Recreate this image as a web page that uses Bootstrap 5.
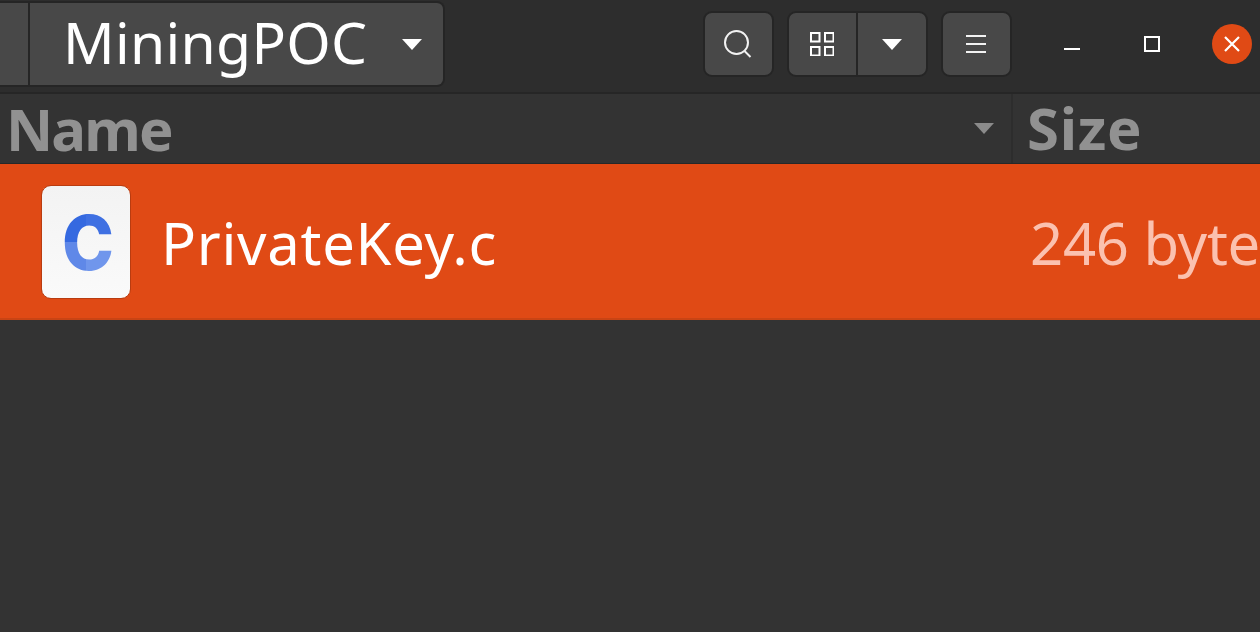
<!DOCTYPE html>
<html lang="en">
<head>
<meta charset="utf-8">
<title>MiningPOC</title>
<link href="https://cdn.jsdelivr.net/npm/bootstrap@5.3.0/dist/css/bootstrap.min.css" rel="stylesheet">
<style>
html,body{height:632px;overflow:hidden}
body{background:#333;font-family:"Noto Sans","Open Sans",sans-serif;color:#fff}
.fm-head{height:94px;background:#2d2d2d;border-bottom:2px solid #262626;padding-top:1px}
.fm-btn{background:#484848;border:2px solid #252525;display:flex;align-items:center;justify-content:center;padding:0;color:#fff}
.fm-crumb-stub{width:30px;height:86px;border-radius:0;border-left:0;border-right-width:2px}
.fm-crumb{width:415px;height:86px;border-left:0;border-radius:0 8px 8px 0;justify-content:flex-start;padding-left:33px}
.fm-crumb-text{font-size:57px;line-height:1;letter-spacing:.3px;position:relative;top:-2px}
.fm-crumb svg{margin-left:35px}
.fm-tools{margin-left:258px;padding-top:10px;gap:13px}
.fm-square{width:71px;height:66px;border-radius:9px}
.fm-split{display:flex}
.fm-split .fm-btn:first-child{width:70px;height:66px;border-radius:9px 0 0 9px;border-right-width:1px}
.fm-split .fm-btn:last-child{width:71px;height:66px;border-radius:0 9px 9px 0;border-left-width:1px}
.fm-search-ico{margin:0 2px 1px 0}
.fm-grid-ico{margin-right:1px}
.fm-menu-ico{margin:0 2px 1px 0}
.fm-win{margin-left:20px;padding-top:23px;gap:0}
.fm-winbtn{width:80px;height:40px;display:flex;align-items:center;justify-content:center}
.fm-min-ico{margin-bottom:4px}
.fm-close{width:40px;height:40px;border-radius:50%;background:#e04a15;margin-left:20px;display:flex;align-items:center;justify-content:center}
.fm-cols{height:70px;background:#333;border-bottom:1px solid #282828}
.fm-col-name{width:1013px;padding-left:6px;border-right:2px solid #2d2d2d}
.fm-col-size{padding-left:14px}
.fm-col-label{font-size:58px;font-weight:700;color:#919191;line-height:68px;display:block}
.fm-label-name{letter-spacing:-1.8px}
.fm-label-size{letter-spacing:.7px}
.fm-sort{margin-right:1px}
.fm-row{height:156px;background:#e04a15;border-bottom:2px solid #c94414}
.fm-icon{width:90px;height:114px;margin:2px 0 0 41px;background:linear-gradient(#f3f3f3,#fafafa);border:1px solid #b93c10;border-radius:10px;flex:none}
.fm-file{font-size:58px;line-height:1;margin-left:30px;width:869px;flex:none;letter-spacing:.7px;position:relative;top:2px}
.fm-bytes{font-size:58px;line-height:1;color:#fbc1af;white-space:nowrap;letter-spacing:-.3px;position:relative;top:2px}
</style>
</head>
<body>
<header class="fm-head d-flex">
  <div class="d-flex">
    <div class="fm-btn fm-crumb-stub"></div>
    <div class="fm-btn fm-crumb">
      <span class="fm-crumb-text">MiningPOC</span>
      <svg width="20" height="11" viewBox="0 0 20 11"><path d="M0 0H20L10 11Z" fill="#fff"/></svg>
    </div>
  </div>
  <div class="fm-tools d-flex align-items-start">
    <button class="fm-btn fm-square" aria-label="Search">
      <svg class="fm-search-ico" width="30" height="30" viewBox="0 0 30 30" fill="none" stroke="#f2f2f2" stroke-width="2"><circle cx="13.5" cy="13.5" r="11.5"/><path d="M21.5 22l6 6"/></svg>
    </button>
    <div class="fm-split">
      <button class="fm-btn" aria-label="Grid view">
        <svg class="fm-grid-ico" width="24" height="24" viewBox="0 0 24 24" fill="none" stroke="#fff" stroke-width="2"><rect x="1" y="1" width="8.5" height="8.5"/><rect x="15" y="1" width="8.5" height="8.5"/><rect x="1" y="15" width="8.5" height="8.5"/><rect x="15" y="15" width="8.5" height="8.5"/></svg>
      </button>
      <button class="fm-btn" aria-label="View options">
        <svg width="20" height="11" viewBox="0 0 20 11"><path d="M0 0H20L10 11Z" fill="#fff"/></svg>
      </button>
    </div>
    <button class="fm-btn fm-square" aria-label="Menu">
      <svg class="fm-menu-ico" width="20" height="20" viewBox="0 0 20 20" stroke="#f2f2f2" stroke-width="2"><path d="M0 2H20M0 10H20M0 18H20"/></svg>
    </button>
  </div>
  <div class="fm-win d-flex align-items-start">
    <div class="fm-winbtn"><svg class="fm-min-ico" width="16" height="16" viewBox="0 0 16 16" stroke="#fff" stroke-width="2"><path d="M0 15H16"/></svg></div>
    <div class="fm-winbtn"><svg width="16" height="16" viewBox="0 0 16 16" fill="none" stroke="#fff" stroke-width="2"><rect x="1" y="1" width="14" height="14"/></svg></div>
    <div class="fm-close"><svg width="16" height="16" viewBox="0 0 16 16" stroke="#fff" stroke-width="2.2"><path d="M1 1L15 15M15 1L1 15"/></svg></div>
  </div>
</header>
<div class="fm-cols d-flex">
  <div class="fm-col-name d-flex justify-content-between align-items-center pe-3">
    <span class="fm-col-label fm-label-name">Name</span>
    <svg class="fm-sort" width="20" height="11" viewBox="0 0 20 11"><path d="M0 0H20L10 11Z" fill="#8b8b8b"/></svg>
  </div>
  <div class="fm-col-size"><span class="fm-col-label fm-label-size">Size</span></div>
</div>
<div class="fm-row d-flex align-items-center">
  <div class="fm-icon d-flex align-items-center justify-content-center">
    <svg width="60" height="70" viewBox="0 0 60 70">
      <defs>
        <pattern id="cfill" width="60" height="70" patternUnits="userSpaceOnUse">
          <rect width="30" height="35" fill="#3569e0"/>
          <rect x="30" width="30" height="35" fill="#3f70e2"/>
          <rect y="35" width="30" height="35" fill="#5f88e8"/>
          <rect x="30" y="35" width="30" height="35" fill="#7096ec"/>
        </pattern>
      </defs>
      <text x="6" y="63" font-family="Inter, sans-serif" font-weight="800" font-size="76" textLength="52" lengthAdjust="spacingAndGlyphs" fill="url(#cfill)">C</text>
    </svg>
  </div>
  <span class="fm-file">PrivateKey.c</span>
  <span class="fm-bytes">246 bytes</span>
</div>
</body>
</html>
